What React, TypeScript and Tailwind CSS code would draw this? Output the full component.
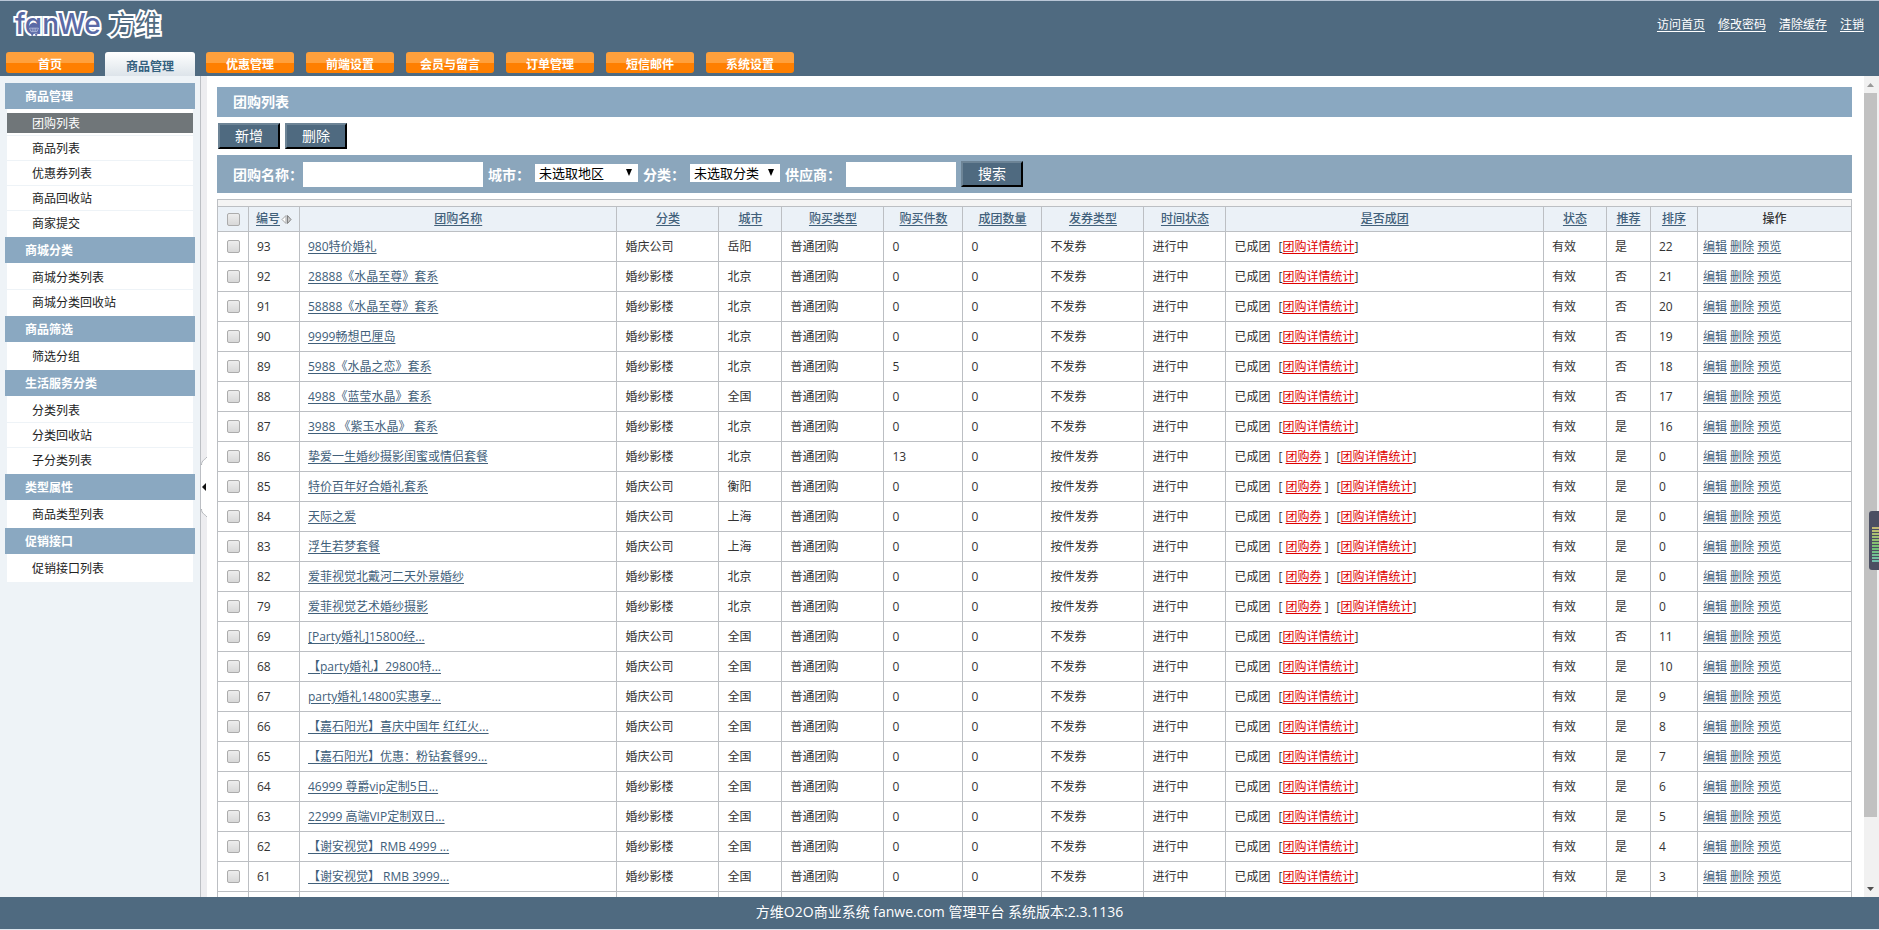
import type { ReactNode } from "react";

const tabs = ["首页", "商品管理", "优惠管理", "前端设置", "会员与留言", "订单管理", "短信邮件", "系统设置"];
const activeTab = "商品管理";

const menu: { title: string; items: string[] }[] = [
  { title: "商品管理", items: ["团购列表", "商品列表", "优惠券列表", "商品回收站", "商家提交"] },
  { title: "商城分类", items: ["商城分类列表", "商城分类回收站"] },
  { title: "商品筛选", items: ["筛选分组"] },
  { title: "生活服务分类", items: ["分类列表", "分类回收站", "子分类列表"] },
  { title: "类型属性", items: ["商品类型列表"] },
  { title: "促销接口", items: ["促销接口列表"] },
];

type Deal = [id: number, name: string, category: string, city: string, bought: number, coupon: boolean, recommended: boolean, sort: number];

const deals: Deal[] = [
  [93, "980特价婚礼", "婚庆公司", "岳阳", 0, false, true, 22],
  [92, "28888《水晶至尊》套系", "婚纱影楼", "北京", 0, false, false, 21],
  [91, "58888《水晶至尊》套系", "婚纱影楼", "北京", 0, false, false, 20],
  [90, "9999畅想巴厘岛", "婚纱影楼", "北京", 0, false, false, 19],
  [89, "5988《水晶之恋》套系", "婚纱影楼", "北京", 5, false, false, 18],
  [88, "4988《蓝莹水晶》套系", "婚纱影楼", "全国", 0, false, false, 17],
  [87, "3988 《紫玉水晶》 套系", "婚纱影楼", "北京", 0, false, true, 16],
  [86, "挚爱一生婚纱摄影闺蜜或情侣套餐", "婚纱影楼", "北京", 13, true, true, 0],
  [85, "特价百年好合婚礼套系", "婚庆公司", "衡阳", 0, true, true, 0],
  [84, "天际之爱", "婚庆公司", "上海", 0, true, true, 0],
  [83, "浮生若梦套餐", "婚庆公司", "上海", 0, true, true, 0],
  [82, "爱菲视觉北戴河二天外景婚纱", "婚纱影楼", "北京", 0, true, true, 0],
  [79, "爱菲视觉艺术婚纱摄影", "婚纱影楼", "北京", 0, true, true, 0],
  [69, "[Party婚礼]15800经...", "婚庆公司", "全国", 0, false, false, 11],
  [68, "【party婚礼】29800特...", "婚庆公司", "全国", 0, false, true, 10],
  [67, "party婚礼14800实惠享...", "婚庆公司", "全国", 0, false, true, 9],
  [66, "【嘉石阳光】喜庆中国年 红红火...", "婚庆公司", "全国", 0, false, true, 8],
  [65, "【嘉石阳光】优惠：粉钻套餐99...", "婚庆公司", "全国", 0, false, true, 7],
  [64, "46999 尊爵vip定制5日...", "婚纱影楼", "全国", 0, false, true, 6],
  [63, "22999 高端VIP定制双日...", "婚纱影楼", "全国", 0, false, true, 5],
  [62, "【谢安视觉】RMB 4999 ...", "婚纱影楼", "全国", 0, false, true, 4],
  [61, "【谢安视觉】 RMB 3999...", "婚纱影楼", "全国", 0, false, true, 3],
];

const columns: { label: string; width: string }[] = [
  { label: "团购名称", width: "" },
  { label: "分类", width: "w-[102px]" },
  { label: "城市", width: "w-[63px]" },
  { label: "购买类型", width: "w-[102px]" },
  { label: "购买件数", width: "w-[79px]" },
  { label: "成团数量", width: "w-[79px]" },
  { label: "发券类型", width: "w-[102px]" },
  { label: "时间状态", width: "w-[82px]" },
  { label: "是否成团", width: "" },
  { label: "状态", width: "w-[63px]" },
  { label: "推荐", width: "w-[44px]" },
  { label: "排序", width: "w-[47px]" },
];

function Logo() {
  return (
    <a href="#" aria-label="fanWe 方维" className="relative flex items-center gap-2 pt-[5px] pl-[15px]">
      <span className="w-[86px] font-[Inter] text-[28px] leading-[36px] font-medium text-[#5a6aa6] [-webkit-text-stroke:4px_#fff] [font-feature-settings:'cv11'] [paint-order:stroke_fill]">
        fanWe
      </span>
      <span className="text-[26px] leading-[36px] text-[#4f6a80] [-webkit-text-stroke:4px_#fff] [paint-order:stroke_fill]">
        方维
      </span>
      <svg className="absolute top-[20px] left-[26px]" width="16" height="16" viewBox="0 0 16 18" aria-hidden="true">
        <path d="M2 8a6 6 0 0 1 12 0l-2 6H4z" fill="#5a6aa6" />
        <path d="M3 8h10l-1.600 4H4.600zM6 8v4M8 8v4M10 8v4" fill="none" stroke="#c9d2ea" strokeWidth="0.700" />
        <circle cx="6" cy="15.500" r="1.300" fill="#5a6aa6" />
        <circle cx="10.500" cy="15.500" r="1.300" fill="#5a6aa6" />
      </svg>
    </a>
  );
}

function TextLink({ children, red = false }: { children: ReactNode; red?: boolean }) {
  return (
    <a href="#" className={red ? "text-[#e00000] underline underline-offset-2" : "text-[#41607a] underline underline-offset-2"}>
      {children}
    </a>
  );
}

function Tick({ label }: { label: string }) {
  return (
    <input
      type="checkbox"
      aria-label={label}
      className="mx-auto block size-[13px] appearance-none rounded-[2px] border border-[#acacac] bg-linear-to-b from-[#ededed] to-[#d8d8d8] checked:bg-[#4f6a80]"
    />
  );
}

function RaisedButton({ children, type = "button" }: { children: ReactNode; type?: "button" | "submit" }) {
  return (
    <button
      type={type}
      className="h-[26px] w-[62px] border-2 border-t-[#6d8496] border-r-black border-b-black border-l-[#6d8496] bg-[#4f6a80] text-[14px] leading-[22px] font-normal text-white"
    >
      {children}
    </button>
  );
}

function Picker({ id, value, width }: { id: string; value: string; width: string }) {
  return (
    <span className={`relative -mt-[2px] block h-[18px] ${width}`}>
      <select id={id} className="block h-full w-full appearance-none bg-white pl-1 text-[13px] leading-[18px] font-normal text-black">
        <option>{value}</option>
      </select>
      <svg className="pointer-events-none absolute top-[5px] right-[6px]" width="6" height="7" viewBox="0 0 6 7" aria-hidden="true">
        <path d="M0 0h6L3 7z" fill="#000" />
      </svg>
    </span>
  );
}

function Sidebar() {
  return (
    <aside className="w-[200px] shrink-0 bg-[#eef3f7] px-[5px] pt-[7px]">
      {menu.map((group) => (
        <section key={group.title}>
          <h2 className="h-[26px] bg-[#8aa8c1] pl-5 text-[12px] leading-[28px] font-bold text-white">{group.title}</h2>
          <ul className="mx-[2px] bg-white pt-[2px] pb-px">
            {group.items.map((item) => (
              <li key={item} className="h-[25px] border-b border-[#eef3f7] pt-[2px] last:border-white">
                <a
                  href="#"
                  className={
                    item === "团购列表"
                      ? "block h-5 bg-[#707679] pl-[25px] text-[12px] leading-[22px] text-white"
                      : "block h-5 pl-[25px] text-[12px] leading-[22px] text-[#222]"
                  }
                >
                  {item}
                </a>
              </li>
            ))}
          </ul>
        </section>
      ))}
    </aside>
  );
}

function Divider() {
  return (
    <div className="flex w-[7px] shrink-0 items-center border-l border-[#bcbfc4] bg-[#ededf0]">
      <button type="button" aria-label="收起菜单" className="block">
        <svg width="6" height="60" viewBox="0 0 6 60" aria-hidden="true">
          <path d="M6 0C4 3 0 3 0 8v44c0 5 4 5 6 8z" fill="#fff" />
          <path d="M6 0C4 3 .5 3 .5 8M.5 52c0 5 3.500 5 5.500 8" fill="none" stroke="#b0b3b8" />
          <path d="M5 26v8l-4-4z" fill="#111" />
        </svg>
      </button>
    </div>
  );
}

function DealTable() {
  return (
    <table className="w-full table-fixed border-collapse border border-[#bcbfc3] text-left text-[12px] leading-[18px] text-[#333]">
      <colgroup>
        <col className="w-[31px]" />
        <col className="w-[51px]" />
        {columns.map((c) => (
          <col key={c.label} className={c.width} />
        ))}
        <col className="w-[154px]" />
      </colgroup>
      <thead>
        <tr>
          <td colSpan={15} className="h-[7px] border border-[#bcbfc3] bg-[#f4f4f4] p-0" />
        </tr>
        <tr className="h-[25px] bg-[#ebf1f7] text-center">
          <th className="border border-[#bcbfc3]">
            <Tick label="全选" />
          </th>
          <th className="border border-[#bcbfc3] font-medium">
            <span className="flex items-center justify-center">
              <TextLink>编号</TextLink>
              <svg width="11" height="11" viewBox="0 0 11 11" className="ml-px" aria-hidden="true">
                <path d="M5 1.500 1 5.500l4 4z" fill="#fff" stroke="#9a9a9a" strokeWidth="0.900" />
                <path d="M6.500 1.500l3.500 4-3.500 4z" fill="#c8c8c8" stroke="#777" strokeWidth="0.900" />
              </svg>
            </span>
          </th>
          {columns.map((c) => (
            <th key={c.label} className="border border-[#bcbfc3] font-medium">
              <TextLink>{c.label}</TextLink>
            </th>
          ))}
          <th className="border border-[#bcbfc3] font-medium">操作</th>
        </tr>
      </thead>
      <tbody className="[&_td]:border [&_td]:border-[#bcbfc3] [&_td]:whitespace-nowrap">
        {deals.map(([id, name, category, city, bought, coupon, recommended, sort]) => (
          <tr key={id} className="h-[30px] bg-white [&_td]:px-2">
            <td>
              <Tick label={`选择 ${id}`} />
            </td>
            <td>{id}</td>
            <td>
              <TextLink>{name}</TextLink>
            </td>
            <td>{category}</td>
            <td>{city}</td>
            <td>普通团购</td>
            <td>{bought}</td>
            <td>0</td>
            <td>{coupon ? "按件发券" : "不发券"}</td>
            <td>进行中</td>
            <td>
              <span className="mr-2">已成团</span>
              {coupon && (
                <span className="mr-2">
                  [ <TextLink red>团购券</TextLink> ]
                </span>
              )}
              [<TextLink red>团购详情统计</TextLink>]
            </td>
            <td>有效</td>
            <td>{recommended ? "是" : "否"}</td>
            <td>{sort}</td>
            <td className="!px-[5px]">
              <TextLink>编辑</TextLink> <TextLink>删除</TextLink> <TextLink>预览</TextLink>
            </td>
          </tr>
        ))}
        <tr className="h-[30px]">
          {Array.from({ length: 15 }, (_, i) => (
            <td key={i} />
          ))}
        </tr>
      </tbody>
    </table>
  );
}

function ScrollRail() {
  return (
    <div className="flex w-[15px] shrink-0 flex-col bg-[#f1f1f1] pr-[2px]" aria-hidden="true">
      <svg className="mt-px shrink-0" width="13" height="16" viewBox="0 0 13 16">
        <path d="M3 10l3.500-4L10 10z" fill="#999" />
      </svg>
      <div className="w-full grow-[724] bg-[#c1c1c1]" />
      <div className="grow-[64]" />
      <svg className="shrink-0" width="13" height="16" viewBox="0 0 13 16">
        <path d="M3 6l3.500 4L10 6z" fill="#505050" />
      </svg>
    </div>
  );
}

function LevelMeter() {
  return (
    <div className="absolute top-[435px] right-0 flex h-[59px] w-[10px] items-end rounded-l-[3px] bg-[#4b4f62] pb-[7px] pl-[3px]" aria-hidden="true">
      <svg width="7" height="36" viewBox="0 0 7 36">
        {Array.from({ length: 12 }, (_, i) => (
          <rect key={i} x="0" y={i * 3} width="7" height="2" fill={`hsl(${55 + i * 10} 38% 60%)`} />
        ))}
      </svg>
    </div>
  );
}

export default function App() {
  return (
    <div className="flex h-screen flex-col overflow-hidden bg-white font-['Open_Sans','Noto_Sans_CJK_SC',sans-serif]" lang="zh-CN">
      <header className="flex h-[76px] shrink-0 flex-col justify-between border-t border-[#b9c6d6] bg-[#4f6a80]">
        <div className="flex items-start justify-between">
          <Logo />
          <nav className="flex gap-[13px] pt-[15px] pr-[15px] text-[12px] leading-[18px] text-white">
            {["访问首页", "修改密码", "清除缓存", "注销"].map((t) => (
              <a key={t} href="#" className="underline underline-offset-2">
                {t}
              </a>
            ))}
          </nav>
        </div>
        <nav className="flex h-6 gap-3 pl-[6px] text-center text-[12px] font-bold">
          {tabs.map((t) =>
            t === activeTab ? (
              <a key={t} href="#" className="-mx-px h-6 w-[90px] rounded-t-[3px] bg-linear-to-b from-white to-[#dde4ea] pt-px leading-7 text-[#34617f]">
                {t}
              </a>
            ) : (
              <a key={t} href="#" className="h-[21px] w-[88px] rounded-[3px] bg-linear-to-b from-[#ffa03c] from-50% to-[#ff7f00] to-50% leading-[26px] text-white">
                {t}
              </a>
            ),
          )}
        </nav>
      </header>

      <div className="relative flex min-h-0 flex-1">
        <Sidebar />
        <Divider />
        <main className="min-w-0 flex-1 overflow-hidden pt-[11px] pr-[12px] pl-[10px]">
          <h1 className="h-[30px] bg-[#8aa8c1] pl-4 text-[14px] leading-[30px] font-bold text-white">团购列表</h1>
          <div className="flex gap-[5px] py-[6px] pl-px">
            <RaisedButton>新增</RaisedButton>
            <RaisedButton>删除</RaisedButton>
          </div>
          <form className="flex h-[38px] items-center gap-[5px] bg-[#8ba6bc] pl-4 text-[14px] font-bold text-white">
            <span className="flex items-center">
              <label htmlFor="deal-name">团购名称：</label>
              <input id="deal-name" type="text" className="h-[25px] w-[180px] bg-white px-1 font-normal text-black" />
            </span>
            <label htmlFor="deal-city">城市：</label>
            <Picker id="deal-city" value="未选取地区" width="w-[103px]" />
            <label htmlFor="deal-category">分类：</label>
            <Picker id="deal-category" value="未选取分类" width="w-[90px]" />
            <label htmlFor="deal-supplier">供应商：</label>
            <input id="deal-supplier" type="text" className="h-[25px] w-[110px] bg-white px-1 font-normal text-black" />
            <RaisedButton type="submit">搜索</RaisedButton>
          </form>
          <div className="pt-[6px]">
            <DealTable />
          </div>
        </main>
        <ScrollRail />
        <LevelMeter />
      </div>

      <footer className="h-[33px] shrink-0 border-b border-[#dfe6ee] bg-[#4f6a80] text-center text-[14px] leading-[30px] text-white">
        方维O2O商业系统 fanwe.com 管理平台 系统版本:2.3.1136
      </footer>
    </div>
  );
}
